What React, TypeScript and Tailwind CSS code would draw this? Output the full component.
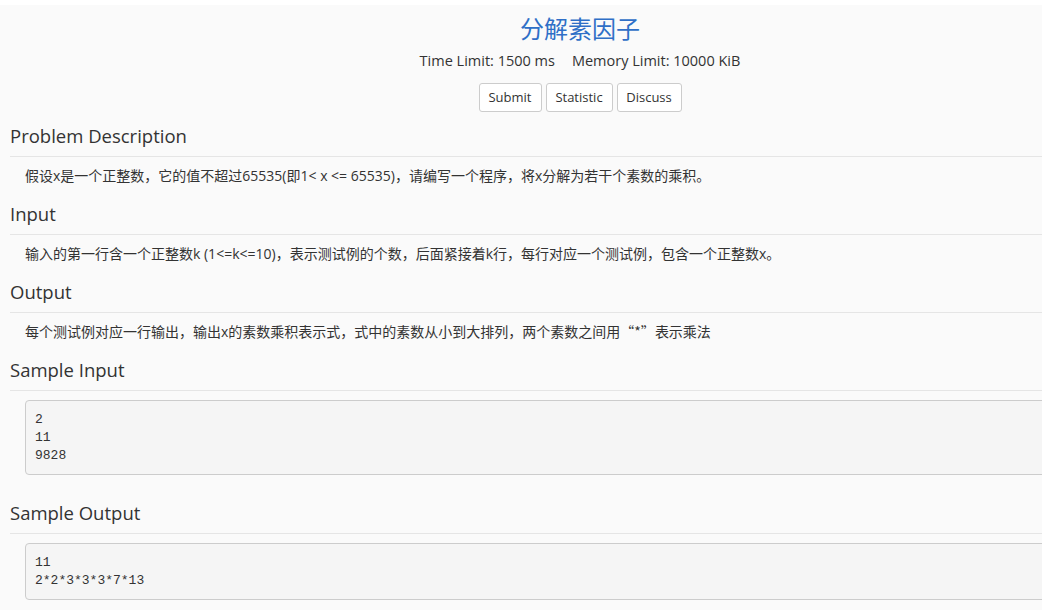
import { FC, ReactNode } from "react";

const FONT = { fontFamily: '"Open Sans", "Noto Sans CJK SC", sans-serif' };

interface ISectionProps {
  title: string;
  children: ReactNode;
}

const Section: FC<ISectionProps> = ({ title, children }) => (
  <div>
    <div className="h-[41px] flex items-center border-b border-[#e5e5e5] text-[18.5px] text-[#333]">
      {title}
    </div>
    {children}
  </div>
);

const Para: FC<{ children: ReactNode }> = ({ children }) => (
  <div className="h-[37px] flex items-center pl-[15px] text-[14px] text-[#333]">
    {children}
  </div>
);

const Sample: FC<{ lines: string[] }> = ({ lines }) => (
  <pre className="mt-[9px] ml-[15px] px-[9px] pt-[10px] pb-[9px] border border-[#ccc] rounded-[4px] bg-[#f5f5f5] text-[13px] leading-[18px] text-[#333] font-['Liberation_Mono',monospace]">
    {lines.join("\n")}
  </pre>
);

const Button: FC<{ label: string; width: string }> = ({ label, width }) => (
  <button
    className={`h-[29px] ${width} bg-white border border-[#ccc] rounded-[3px] text-[13px] text-[#333]`}
  >
    {label}
  </button>
);

export default function App() {
  return (
    <div className="w-[1042px] h-[610px] overflow-hidden bg-white" style={FONT}>
      <div className="mt-[5px] w-[1160px] min-h-[605px] bg-[#fafafa] px-[10px]">
        {/* Заголовок задачи */}
        <div className="flex flex-col items-center">
          <h1 className="h-[48px] flex items-center text-[24px] text-[#2f6fc7]">分解素因子</h1>
          <div className="h-[16px] flex items-center text-[14.5px] text-[#333]">
            <span>Time Limit: 1500 ms</span>
            <span className="ml-[17px]">Memory Limit: 10000 KiB</span>
          </div>
          <div className="mt-[14px] flex gap-[4px]">
            <Button label="Submit" width="w-[63px]" />
            <Button label="Statistic" width="w-[67px]" />
            <Button label="Discuss" width="w-[65px]" />
          </div>
        </div>

        <div className="mt-[4px]">
          <Section title="Problem Description">
            <Para>假设x是一个正整数，它的值不超过65535(即1&lt; x &lt;= 65535)，请编写一个程序，将x分解为若干个素数的乘积。</Para>
          </Section>
          <Section title="Input">
            <Para>输入的第一行含一个正整数k (1&lt;=k&lt;=10)，表示测试例的个数，后面紧接着k行，每行对应一个测试例，包含一个正整数x。</Para>
          </Section>
          <Section title="Output">
            <Para>
              每个测试例对应一行输出，输出x的素数乘积表示式，式中的素数从小到大排列，两个素数之间用
              <span className="font-['Noto_Sans_CJK_SC',sans-serif]">“*”</span>表示乘法
            </Para>
          </Section>
          <Section title="Sample Input">
            <Sample lines={["2", "11", "9828"]} />
          </Section>
          <div className="mt-[18px]">
            <Section title="Sample Output">
              <Sample lines={["11", "2*2*3*3*3*7*13"]} />
            </Section>
          </div>
        </div>
      </div>
    </div>
  );
}
